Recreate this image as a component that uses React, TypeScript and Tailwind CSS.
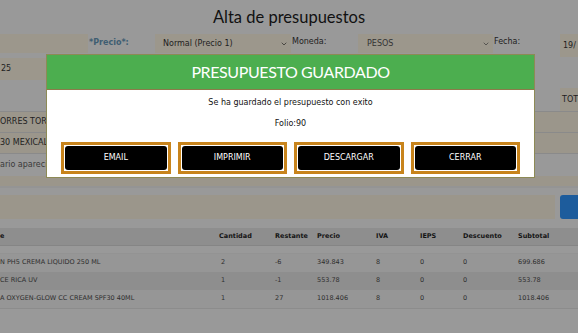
import { ChevronDown } from 'lucide-react'

const rows = [
  ['N PH5 CREMA LIQUIDO 250 ML', '2', '-6', '349.843', '8', '0', '0', '699.686'],
  ['CE RICA UV', '1', '-1', '553.78', '8', '0', '0', '553.78'],
  ['A OXYGEN-GLOW CC CREAM SPF30 40ML', '1', '27', '1018.406', '8', '0', '0', '1018.406'],
]

const cols = 'grid grid-cols-[221px_54px_42px_59px_44px_43px_55px_1fr]'

function Modal() {
  return (
    <div className="absolute left-[46px] top-[54px] w-[489px] border border-[#8d8a55] bg-white">
      <div className="flex h-[35px] items-center justify-center border-b border-[#8d7a4a] bg-[#4cae4f] font-['Lato',sans-serif] text-[16px] tracking-[-0.4px] text-white">
        PRESUPUESTO GUARDADO
      </div>
      <div className="flex flex-col items-center pt-[8px] text-[8px] leading-[10px] text-[#111]">
        <p>Se ha guardado el presupuesto con exito</p>
        <p className="mt-[11px]">Folio:90</p>
      </div>
      <div className="mt-[13px] grid grid-cols-4 gap-[7px] px-[14px] pb-[3px]">
        {['EMAIL', 'IMPRIMIR', 'DESCARGAR', 'CERRAR'].map((b) => (
          <div key={b} className="h-[32px] border-[3px] border-[#c8841c] p-[1px]">
            <button className="flex h-full w-full items-center justify-center rounded-[3px] bg-black text-[8px] text-white">
              {b}
            </button>
          </div>
        ))}
      </div>
    </div>
  )
}

export default function App() {
  return (
    <div className="relative h-[333px] w-[578px] overflow-hidden bg-[#999999] font-['DejaVu_Sans',sans-serif] text-[#1e1e1e]">
      <div className="flex flex-col">
        <h1 className="h-[34px] pt-[5px] text-center font-['Lato',sans-serif] text-[16.5px] leading-[24px] text-[#111]">
          Alta de presupuestos
        </h1>

        {/* fila precio / moneda / fecha */}
        <div className="flex h-[24px] items-start text-[8px]">
          <div className="h-[19px] w-[88px] bg-[#9c978c]" />
          <div className="w-[67px] pl-[1px] pt-[3px] font-bold text-[#3f5e72]">*Precio*:</div>
          <div className="flex h-[19px] w-[136px] items-center justify-between bg-[#9c978c] pl-[8px] pr-[3px]">
            <span>Normal (Precio 1)</span>
            <ChevronDown className="h-[8px] w-[8px]" strokeWidth={2} />
          </div>
          <div className="w-[67px] pl-[1px] pt-[2px]">Moneda:</div>
          <div className="flex h-[19px] w-[135px] items-center justify-between bg-[#9c978c] pl-[9px] pr-[3px] text-[#333]">
            <span>PESOS</span>
            <ChevronDown className="h-[8px] w-[8px]" strokeWidth={2} />
          </div>
          <div className="w-[67px] pl-[1px] pt-[2px]">Fecha:</div>
          <div className="flex h-[23px] flex-1 items-center bg-[#9c978c] pl-[3px]">19/</div>
        </div>

        <div className="flex h-[22px] items-center text-[8px]">
          <div className="flex h-full w-[150px] items-center bg-[#9c978c] pl-[1px]">25</div>
        </div>

        <div className="mt-[8px] flex h-[23px] justify-end text-[8px]">
          <div className="flex h-full w-[18px] items-center bg-[#9c978c] pl-[2px]">TOT</div>
        </div>

        <div className="flex h-[22px] items-center border-y border-[#8a8a8a] bg-[#9b968b] text-[8px]">ORRES TORRES</div>
        <div className="flex h-[21px] items-center border-b border-[#8a8a8a] bg-[#9b968b] text-[8px]">30 MEXICALI</div>
        <div className="flex h-[22px] items-center text-[8px] text-[#3a3a3a]">ario apareci</div>

        <div className="h-[12px] border-b-2 border-[#949494] bg-[#9b968b]" />
        <div className="h-[7px]" />
        <div className="flex h-[24px] gap-[5px]">
          <div className="flex-1 bg-[#9b968b]" />
          <div className="w-[18px] rounded-l-[3px] bg-[#1d5c9c]" />
        </div>
        <div className="h-[9px]" />

        {/* tabla */}
        <div className="text-[6.5px]">
          <div className={`${cols} h-[18px] items-center border-b border-[#858585] bg-[#8e8e8e] font-bold text-[#141414]`}>
            <span>e</span>
            <span className="-ml-[2px]">Cantidad</span>
            <span>Restante</span>
            <span>Precio</span>
            <span>IVA</span>
            <span>IEPS</span>
            <span>Descuento</span>
            <span>Subtotal</span>
          </div>
          <div className="h-[8px] border-b border-[#939393]" />
          {rows.map((r, i) => (
            <div
              key={i}
              className={`${cols} h-[18px] items-center text-[#2e2e2e] ${i === 1 ? 'bg-[#8e8e8e]' : 'bg-[#969696]'}`}
            >
              {r.map((c, j) => (
                <span key={j}>{c}</span>
              ))}
            </div>
          ))}
          <div className="border-b border-[#8c8c8c]" />
        </div>
      </div>

      <Modal />
    </div>
  )
}
